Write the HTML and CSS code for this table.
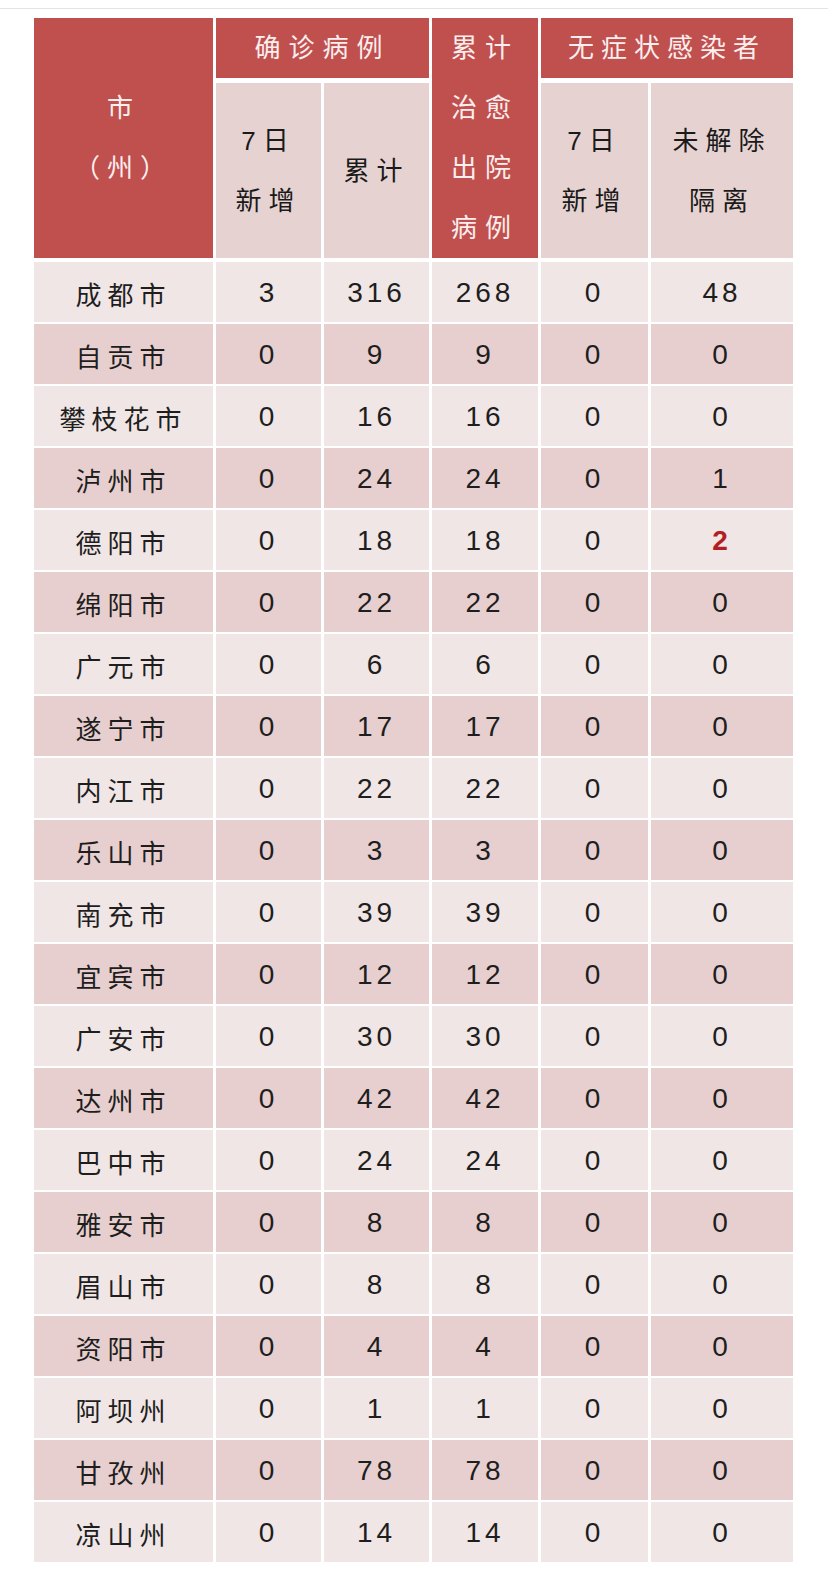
FILE: index.html
```html
<!DOCTYPE html>
<html lang="zh-CN">
<head>
<meta charset="utf-8">
<title>四川省疫情数据</title>
<link rel="stylesheet" href="styles.css">
</head>
<body>
<div class="topline"></div>
<div class="table">
  <div class="head">
    <div class="cell red city"><span>市</span><span>（州）</span></div>
    <div class="cell red grp1">确诊病例</div>
    <div class="cell pink s1"><span>7日</span><span>新增</span></div>
    <div class="cell pink s2">累计</div>
    <div class="cell red cured"><span>累计</span><span>治愈</span><span>出院</span><span>病例</span></div>
    <div class="cell red grp2">无症状感染者</div>
    <div class="cell pink s3"><span>7日</span><span>新增</span></div>
    <div class="cell pink s4"><span>未解除</span><span>隔离</span></div>
  </div>
  <div class="body">
    <div class="row"><div class="c name">成都市</div><div class="c">3</div><div class="c">316</div><div class="c">268</div><div class="c">0</div><div class="c">48</div></div>
    <div class="row"><div class="c name">自贡市</div><div class="c">0</div><div class="c">9</div><div class="c">9</div><div class="c">0</div><div class="c">0</div></div>
    <div class="row"><div class="c name">攀枝花市</div><div class="c">0</div><div class="c">16</div><div class="c">16</div><div class="c">0</div><div class="c">0</div></div>
    <div class="row"><div class="c name">泸州市</div><div class="c">0</div><div class="c">24</div><div class="c">24</div><div class="c">0</div><div class="c">1</div></div>
    <div class="row"><div class="c name">德阳市</div><div class="c">0</div><div class="c">18</div><div class="c">18</div><div class="c">0</div><div class="c hl">2</div></div>
    <div class="row"><div class="c name">绵阳市</div><div class="c">0</div><div class="c">22</div><div class="c">22</div><div class="c">0</div><div class="c">0</div></div>
    <div class="row"><div class="c name">广元市</div><div class="c">0</div><div class="c">6</div><div class="c">6</div><div class="c">0</div><div class="c">0</div></div>
    <div class="row"><div class="c name">遂宁市</div><div class="c">0</div><div class="c">17</div><div class="c">17</div><div class="c">0</div><div class="c">0</div></div>
    <div class="row"><div class="c name">内江市</div><div class="c">0</div><div class="c">22</div><div class="c">22</div><div class="c">0</div><div class="c">0</div></div>
    <div class="row"><div class="c name">乐山市</div><div class="c">0</div><div class="c">3</div><div class="c">3</div><div class="c">0</div><div class="c">0</div></div>
    <div class="row"><div class="c name">南充市</div><div class="c">0</div><div class="c">39</div><div class="c">39</div><div class="c">0</div><div class="c">0</div></div>
    <div class="row"><div class="c name">宜宾市</div><div class="c">0</div><div class="c">12</div><div class="c">12</div><div class="c">0</div><div class="c">0</div></div>
    <div class="row"><div class="c name">广安市</div><div class="c">0</div><div class="c">30</div><div class="c">30</div><div class="c">0</div><div class="c">0</div></div>
    <div class="row"><div class="c name">达州市</div><div class="c">0</div><div class="c">42</div><div class="c">42</div><div class="c">0</div><div class="c">0</div></div>
    <div class="row"><div class="c name">巴中市</div><div class="c">0</div><div class="c">24</div><div class="c">24</div><div class="c">0</div><div class="c">0</div></div>
    <div class="row"><div class="c name">雅安市</div><div class="c">0</div><div class="c">8</div><div class="c">8</div><div class="c">0</div><div class="c">0</div></div>
    <div class="row"><div class="c name">眉山市</div><div class="c">0</div><div class="c">8</div><div class="c">8</div><div class="c">0</div><div class="c">0</div></div>
    <div class="row"><div class="c name">资阳市</div><div class="c">0</div><div class="c">4</div><div class="c">4</div><div class="c">0</div><div class="c">0</div></div>
    <div class="row"><div class="c name">阿坝州</div><div class="c">0</div><div class="c">1</div><div class="c">1</div><div class="c">0</div><div class="c">0</div></div>
    <div class="row"><div class="c name">甘孜州</div><div class="c">0</div><div class="c">78</div><div class="c">78</div><div class="c">0</div><div class="c">0</div></div>
    <div class="row"><div class="c name">凉山州</div><div class="c">0</div><div class="c">14</div><div class="c">14</div><div class="c">0</div><div class="c">0</div></div>
  </div>
</div>
</body>
</html>
```
FILE: styles.css
```css
html, body {
  margin: 0;
  padding: 0;
  background: #ffffff;
}
body {
  font-family: "Liberation Sans", "Noto Sans CJK SC", sans-serif;
  color: #1c1c1c;
  width: 828px;
}
.topline {
  margin-top: 8px;
  height: 1px;
  background: #e4e4e4;
}
.table {
  margin: 9px 0 0 34px;
  width: 759px;
}
.head {
  display: grid;
  grid-template-columns: 179px 105px 105px 106px 107px 142px;
  grid-template-rows: 60px 175px;
  column-gap: 3px;
  row-gap: 5px;
}
.cell {
  display: flex;
  flex-direction: column;
  align-items: center;
  justify-content: center;
  font-size: 26px;
  line-height: 60px;
  letter-spacing: 7px;
}
.red {
  background: #c0504e;
  color: #fbeeee;
}
.pink {
  background: #e6d2d1;
  color: #1a1a1a;
}
.city { grid-row: 1 / 3; grid-column: 1; }
.grp1 { grid-row: 1; grid-column: 2 / 4; letter-spacing: 8px; }
.s1 { grid-row: 2; grid-column: 2; }
.s2 { grid-row: 2; grid-column: 3; }
.cured { grid-row: 1 / 3; grid-column: 4; letter-spacing: 8px; }
.grp2 { grid-row: 1; grid-column: 5 / 7; letter-spacing: 7px; }
.s3 { grid-row: 2; grid-column: 5; }
.s4 { grid-row: 2; grid-column: 6; }
.body {
  margin-top: 4px;
  display: flex;
  flex-direction: column;
  gap: 2px;
}
.row {
  display: grid;
  grid-template-columns: 179px 105px 105px 106px 107px 142px;
  column-gap: 3px;
  height: 60px;
}
.c {
  display: flex;
  align-items: center;
  justify-content: center;
  font-size: 28px;
  letter-spacing: 4px;
  padding-top: 2px;
  background: #f0e6e5;
  color: #1e1e1e;
}
.c.name {
  font-size: 26px;
  letter-spacing: 6px;
}
.row:nth-child(even) .c {
  background: #e7cfcf;
}
.c.hl {
  color: #b11f24;
  font-weight: bold;
}
```
